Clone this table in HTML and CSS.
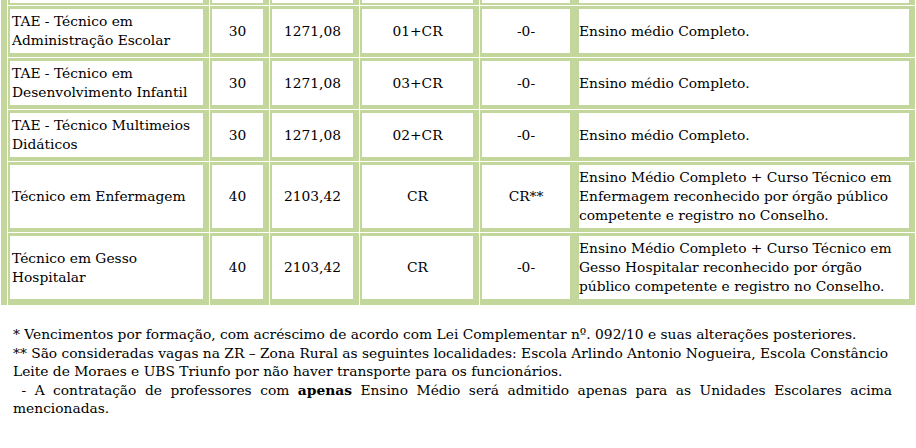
FILE: index.html
```html
<!DOCTYPE html>
<html lang="pt-BR">
<head>
<meta charset="utf-8">
<title>Quadro de vagas</title>
<link rel="stylesheet" href="styles.css">
</head>
<body>
<div class="page">
  <div class="frame">
    <div class="grid">
      <div class="cell tail"></div><div class="cell tail"></div><div class="cell tail"></div><div class="cell tail"></div><div class="cell tail c5"></div><div class="cell tail"></div>

      <div class="cell left">TAE - Técnico em<br>Administração Escolar</div>
      <div class="cell">30</div>
      <div class="cell">1271,08</div>
      <div class="cell">01+CR</div>
      <div class="cell c5">-0-</div>
      <div class="cell desc">Ensino médio Completo.</div>

      <div class="cell left">TAE - Técnico em<br>Desenvolvimento Infantil</div>
      <div class="cell">30</div>
      <div class="cell">1271,08</div>
      <div class="cell">03+CR</div>
      <div class="cell c5">-0-</div>
      <div class="cell desc">Ensino médio Completo.</div>

      <div class="cell left">TAE - Técnico Multimeios<br>Didáticos</div>
      <div class="cell">30</div>
      <div class="cell">1271,08</div>
      <div class="cell">02+CR</div>
      <div class="cell c5">-0-</div>
      <div class="cell desc">Ensino médio Completo.</div>

      <div class="cell left">Técnico em Enfermagem</div>
      <div class="cell">40</div>
      <div class="cell">2103,42</div>
      <div class="cell">CR</div>
      <div class="cell c5">CR**</div>
      <div class="cell desc">Ensino Médio Completo + Curso Técnico em<br>Enfermagem reconhecido por órgão público<br>competente e registro no Conselho.</div>

      <div class="cell left last">Técnico em Gesso<br>Hospitalar</div>
      <div class="cell last">40</div>
      <div class="cell last">2103,42</div>
      <div class="cell last">CR</div>
      <div class="cell last c5">-0-</div>
      <div class="cell desc last">Ensino Médio Completo + Curso Técnico em<br>Gesso Hospitalar reconhecido por órgão<br>público competente e registro no Conselho.</div>
    </div>
  </div>

  <div class="notes">
    <p class="note">* Vencimentos por formação, com acréscimo de acordo com Lei Complementar nº. 092/10 e suas alterações posteriores.</p>
    <p class="note">** São consideradas vagas na ZR – Zona Rural as seguintes localidades: Escola Arlindo Antonio Nogueira, Escola Constâncio<br>Leite de Moraes e UBS Triunfo por não haver transporte para os funcionários.</p>
    <p class="note justify">&nbsp;- A contratação de professores com <b>apenas</b> Ensino Médio será admitido apenas para as Unidades Escolares acima mencionadas.</p>
  </div>
</div>
</body>
</html>
```

FILE: styles.css
```css
html, body {
  margin: 0;
  padding: 0;
  background: #ffffff;
  overflow: hidden;
}

body {
  width: 916px;
  height: 448px;
  font-family: "DejaVu Serif", "Liberation Serif", serif;
  font-size: 13.8px;
  color: #000;
}

.page {
  padding-left: 1px;
  width: max-content;
}

.frame {
  background: #c3d69b;
  padding: 0 6px;
  width: max-content;
}

.grid {
  display: grid;
  grid-template-columns: 201px 59px 89px 119px 96px 338px;
  gap: 1px;
  background: #ffffff;
  padding: 0 1px;
}

.cell {
  background: #ffffff;
  border-style: solid;
  border-color: #c3d69b;
  border-width: 3px 6px 4px 2px;
  padding: 3px 0;
  line-height: 19px;
  display: flex;
  align-items: center;
  justify-content: center;
  text-align: center;
}

.cell.c5 {
  box-shadow: 1px 0 0 #c3d69b;
}

.cell.tail {
  border-top-width: 0;
  border-bottom-width: 2px;
  height: 3px;
  padding: 0;
}

.cell.left {
  justify-content: flex-start;
  text-align: left;
  padding-left: 2px;
}

.cell.desc {
  justify-content: flex-start;
  text-align: left;
  padding-left: 0;
}

.cell.last {
  border-bottom-width: 6px;
}

.notes {
  padding: 20px 0 0 12px;
  width: 879px;
}

.note {
  margin: 0;
  line-height: 18.5px;
}

.justify {
  text-align: justify;
}
```
